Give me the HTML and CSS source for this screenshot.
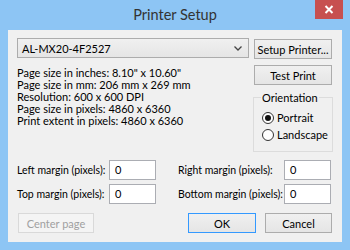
FILE: index.html
```html
<!DOCTYPE html>
<html lang="en">
<head>
    <meta charset="UTF-8">
    <title>Printer Setup</title>
    <link rel="stylesheet" href="styles.css">
</head>
<body>
    <div class="window">
        <div class="titlebar">
            <span></span>
            <span class="title">Printer Setup</span>
            <span class="close">
                <svg width="10" height="9" viewBox="0 0 10 9"><path d="M1.5 1 L8.5 8 M8.5 1 L1.5 8" stroke="#fff" stroke-width="2"/></svg>
            </span>
        </div>

        <div class="client">
            <div class="top">
                <div class="leftcol">
                    <div class="combo">
                        <span>AL-MX20-4F2527</span>
                        <svg width="8" height="5" viewBox="0 0 8 5"><path d="M0.5 0.5 L4 4 L7.5 0.5" stroke="#444" stroke-width="1.3" fill="none"/></svg>
                    </div>
                    <div class="info">
                        <div>Page size in inches: 8.10" x 10.60"</div>
                        <div>Page size in mm: 206 mm x 269 mm</div>
                        <div>Resolution: 600 x 600 DPI</div>
                        <div>Page size in pixels: 4860 x 6360</div>
                        <div>Print extent in pixels: 4860 x 6360</div>
                    </div>
                </div>
                <div class="rightcol">
                    <button class="btn setup">Setup Printer...</button>
                    <button class="btn test">Test Print</button>
                    <fieldset class="group">
                        <legend>Orientation</legend>
                        <div class="radio"><span class="dot on"></span>Portrait</div>
                        <div class="radio"><span class="dot"></span>Landscape</div>
                    </fieldset>
                </div>
            </div>

            <div class="margins">
                <span class="lbl">Left margin (pixels):</span>
                <span class="field">0</span>
                <span></span>
                <span class="lbl">Right margin (pixels):</span>
                <span class="field">0</span>

                <span class="lbl">Top margin (pixels):</span>
                <span class="field">0</span>
                <span></span>
                <span class="lbl">Bottom margin (pixels):</span>
                <span class="field">0</span>
            </div>

            <div class="actions">
                <button class="btn center" disabled>Center page</button>
                <button class="btn ok">OK</button>
                <button class="btn cancel">Cancel</button>
            </div>
        </div>
    </div>
</body>
</html>
```

FILE: styles.css
```css
body {
    margin: 0;
    background-color: #8dc5f4;
    font-family: Lato, "Noto Sans", sans-serif;
    font-size: 11px;
    color: #000;
}

.window {
    width: 350px;
    height: 250px;
    background-color: #8dc5f4;
    overflow: hidden;
}

.titlebar {
    height: 30px;
    display: grid;
    grid-template-columns: 1fr auto 1fr;
    align-items: start;
}

.title {
    font-size: 14.5px;
    color: #333;
    line-height: 29px;
}

.close {
    justify-self: end;
    margin-right: 7px;
    width: 28px;
    height: 19px;
    background-color: #c75050;
    display: flex;
    align-items: center;
    justify-content: center;
}

.client {
    margin: 0 8px;
    height: 212px;
    background-color: #f0f0f0;
    padding: 8px 10px 0 9px;
    box-sizing: border-box;
}

.top {
    display: grid;
    grid-template-columns: 232px 78px;
    column-gap: 5px;
}

.combo {
    height: 20px;
    box-sizing: border-box;
    border: 1px solid #acacac;
    background: linear-gradient(#f0f0f0, #e5e5e5);
    display: flex;
    align-items: center;
    justify-content: space-between;
    padding: 0 6px 0 4px;
}

.info {
    margin-top: 9px;
    line-height: 12px;
}

.rightcol {
    display: flex;
    flex-direction: column;
}

.btn {
    font-family: inherit;
    font-size: 11px;
    color: #000;
    border: 1px solid #acacac;
    background: linear-gradient(#f0f0f0, #e5e5e5);
    padding: 0;
    height: 20px;
    white-space: nowrap;
}

.setup {
    margin-top: 1px;
}

.test {
    margin-top: 6px;
}

.group {
    margin: 6px -1px 0 -1px;
    border: 1px solid #dcdcdc;
    padding: 5px 0 8px 8px;
}

.group legend {
    padding: 0 1px;
    margin-left: -1px;
    line-height: 13px;
}

.radio {
    display: flex;
    align-items: center;
    height: 17px;
}

.dot {
    width: 12px;
    height: 12px;
    box-sizing: border-box;
    border: 1px solid #333;
    border-radius: 50%;
    background: #fff;
    margin-right: 3px;
    display: flex;
    align-items: center;
    justify-content: center;
}

.dot.on::after {
    content: "";
    width: 6px;
    height: 6px;
    border-radius: 50%;
    background: #111;
}

.margins {
    margin-top: 8px;
    display: grid;
    grid-template-columns: 92px 47px 22px 106px 47px;
    grid-auto-rows: 20px;
    row-gap: 4px;
    align-items: center;
}

.lbl {
    white-space: nowrap;
    font-size: 10.5px;
}

.field {
    height: 20px;
    box-sizing: border-box;
    border: 1px solid #abadb3;
    background: #fff;
    padding: 1px 0 0 5px;
    line-height: 16px;
}

.actions {
    margin-top: 9px;
    display: flex;
}

.center {
    margin-left: 1px;
    width: 76px;
    color: #a0a0a0;
    border-color: #d9d9d9;
    background: #f4f4f4;
}

.ok {
    margin-left: auto;
    width: 68px;
    border-color: #3399ff;
}

.cancel {
    margin-left: 9px;
    width: 67px;
}
```
